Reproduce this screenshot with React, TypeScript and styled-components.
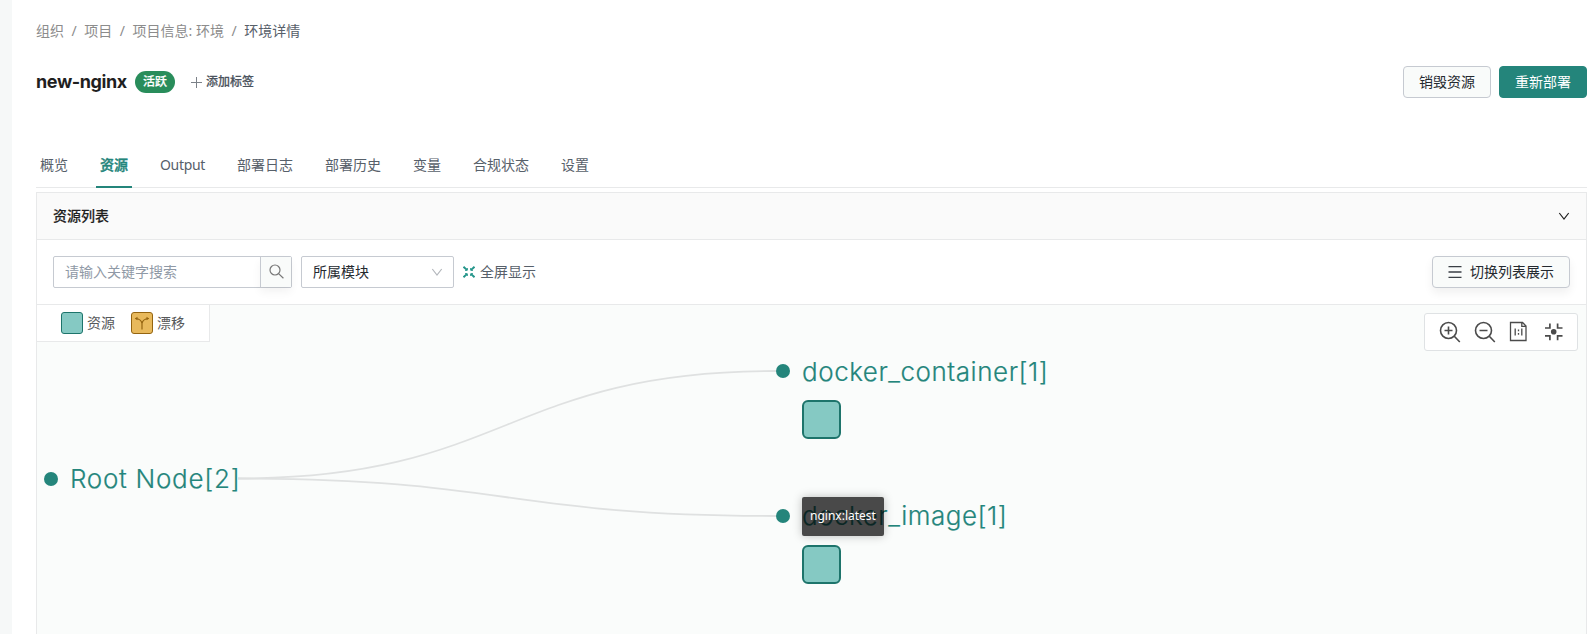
import React from "react";
import styled, { createGlobalStyle } from "styled-components";

const Global = createGlobalStyle`
  * { box-sizing: border-box; }
  body { margin: 0; background: #fff; overflow: hidden; }
`;

const TEAL = "#24857b";
const LINE = "#e8e9ea";

const Page = styled.div`
  display: flex;
  height: 634px;
  font: 14px/22px "Noto Sans", "Noto Sans CJK SC", sans-serif;
  color: #24292f;
`;
const Gutter = styled.div`
  flex: 0 0 12px;
  background: #f6f8f8;
`;
const Main = styled.main`
  flex: 1;
  min-width: 0;
  display: flex;
  flex-direction: column;
  padding: 20px 4px 0 24px;
`;
const Breadcrumb = styled.nav`
  display: flex;
  height: 22px;
  white-space: pre;
`;
const Crumb = styled.span<{ $current?: boolean }>`
  color: ${(p) => (p.$current ? "#57606a" : "#8c8c8c")};
`;
const Slash = styled.span`
  width: 20.300px;
  text-align: center;
  color: #8c8c8c;
`;
const TitleRow = styled.header`
  display: flex;
  align-items: center;
  height: 32px;
  margin-top: 24px;
`;
const Title = styled.h1`
  margin: 0;
  width: 91px;
  white-space: nowrap;
  font: 700 18px/26px Inter, sans-serif;
  letter-spacing: -0.4px;
  color: #1f1f1f;
`;
const Badge = styled.span`
  width: 40px;
  height: 22px;
  margin-left: 8px;
  border-radius: 11px;
  background: #298d5b;
  color: #fff;
  font-size: 12px;
  font-weight: 500;
  text-align: center;
  -webkit-text-stroke: 0.2px currentColor;
`;
const AddTag = styled.span`
  display: flex;
  align-items: center;
  gap: 4px;
  margin-left: 16px;
  font-size: 12px;
  font-weight: 500;
  color: #4b535d;
  -webkit-text-stroke: 0.2px currentColor;
`;
const Actions = styled.div`
  display: flex;
  gap: 8px;
  margin-left: auto;
`;
const Button = styled.button<{ $primary?: boolean; $width: number; $raised?: boolean }>`
  display: flex;
  align-items: center;
  justify-content: center;
  gap: 8px;
  width: ${(p) => p.$width}px;
  height: 32px;
  padding: 0;
  border: 1px solid ${(p) => (p.$primary ? TEAL : "#c6cad1")};
  border-radius: 4px;
  background: ${(p) => (p.$primary ? TEAL : "#f9fbfa")};
  color: ${(p) => (p.$primary ? "#fff" : "#24292f")};
  font: inherit;
  box-shadow: ${(p) => (p.$raised ? "0 5px 10px rgba(0, 0, 0, 0.06)" : "none")};
`;
const Tabs = styled.div`
  display: flex;
  gap: 24px;
  height: 46px;
  margin-top: 44px;
  border-bottom: 1px solid ${LINE};
  flex: none;
`;
const Tab = styled.div<{ $active?: boolean; $latin?: boolean }>`
  height: 46px;
  padding: 12px 4px 0;
  border-bottom: 2px solid ${(p) => (p.$active ? TEAL : "transparent")};
  color: ${(p) => (p.$active ? "#24857b" : "#57606a")};
  font-weight: ${(p) => (p.$active ? 500 : 400)};
  letter-spacing: ${(p) => (p.$latin ? "-0.33px" : "0")};
  -webkit-text-stroke: ${(p) => (p.$active ? "0.4px currentColor" : "0")};
`;
const Card = styled.section`
  flex: 1;
  display: flex;
  flex-direction: column;
  margin-top: 4px;
  border: 1px solid ${LINE};
  border-bottom: 0;
`;
const CardHeader = styled.div`
  display: flex;
  align-items: center;
  justify-content: space-between;
  height: 47px;
  flex: none;
  padding: 0 16px;
  background: #fafafa;
  border-bottom: 1px solid ${LINE};
  font-weight: 500;
  color: #1f1f1f;
  -webkit-text-stroke: 0.15px currentColor;
`;
const Toolbar = styled.div`
  display: flex;
  align-items: center;
  height: 65px;
  flex: none;
  padding: 0 16px;
  border-bottom: 1px solid ${LINE};
`;
const Search = styled.div`
  display: flex;
  width: 239px;
  height: 32px;
  border: 1px solid #c6cad1;
  border-radius: 2px;
`;
const Placeholder = styled.div`
  flex: 1;
  padding: 4px 11px;
  color: #8f99a6;
`;
const SearchButton = styled.div`
  display: flex;
  align-items: center;
  justify-content: center;
  width: 31px;
  padding-bottom: 2px;
  border-left: 1px solid #c6cad1;
  background: #f9fbfa;
  box-shadow: 0 5px 10px rgba(0, 0, 0, 0.05);
`;
const Select = styled.div`
  display: flex;
  align-items: center;
  justify-content: space-between;
  width: 153px;
  height: 32px;
  margin-left: 9px;
  padding: 0 10px 0 11px;
  border: 1px solid #c6cad1;
  border-radius: 2px;
`;
const FullScreen = styled.div`
  display: flex;
  align-items: center;
  gap: 5px;
  margin-left: 9px;
  margin-right: auto;
  color: #57606a;
`;
const Canvas = styled.div`
  position: relative;
  flex: 1;
  background: #fafcfb;
  overflow: hidden;
`;
const CanvasHead = styled.div`
  display: flex;
  justify-content: space-between;
  align-items: flex-start;
`;
const Legend = styled.div`
  display: flex;
  align-items: center;
  gap: 16px;
  width: 173px;
  height: 37px;
  padding-left: 24px;
  background: #fff;
  border-right: 1px solid ${LINE};
  border-bottom: 1px solid ${LINE};
`;
const LegendItem = styled.div`
  display: flex;
  align-items: center;
  gap: 4px;
  color: #57595b;
`;
const Swatch = styled.span<{ $fill: string; $line: string }>`
  display: flex;
  align-items: center;
  justify-content: center;
  width: 22px;
  height: 22px;
  border: 1px solid ${(p) => p.$line};
  border-radius: 3px;
  background: ${(p) => p.$fill};
`;
const Tools = styled.div`
  display: flex;
  align-items: center;
  gap: 12.600px;
  width: 154px;
  height: 38px;
  margin: 8px 8px 0 0;
  padding-left: 14px;
  background: #fff;
  border: 1px solid #dfe2e4;
  border-radius: 3px;
`;
const Edges = styled.svg`
  position: absolute;
  left: 0;
  top: 0;
`;
const Node = styled.div<{ $x: number; $y: number }>`
  position: absolute;
  left: ${(p) => p.$x}px;
  top: ${(p) => p.$y}px;
`;
const NodeLabel = styled.div<{ $spacing: number; $drop?: number }>`
  display: flex;
  align-items: center;
  gap: 12.500px;
  height: 36px;
  white-space: pre;
  color: ${TEAL};
  font: 300 26px/32px Inter, sans-serif;
  letter-spacing: ${(p) => p.$spacing}px;

  &::before {
    content: "";
    width: 14px;
    height: 14px;
    border-radius: 50%;
    background: ${TEAL};
  }

  span {
    padding-top: ${(p) => (p.$drop ?? 0) * 2}px;
    -webkit-text-stroke: 0.2px currentColor;
  }
`;
const Resource = styled.div`
  width: 39px;
  height: 39px;
  margin: 11px 0 0 26px;
  border: 2px solid #1d746b;
  border-radius: 6px;
  background: #85c9c3;
`;
const Tooltip = styled.div`
  position: absolute;
  left: 765px;
  top: 192px;
  width: 82px;
  height: 39px;
  border-radius: 2px;
  background: rgba(0, 0, 0, 0.71);
  box-shadow: 0 0 10px rgba(0, 0, 0, 0.25);
  color: #fff;
  font-size: 12px;
  line-height: 38px;
  text-align: center;
`;

const Chevron = ({ color, size }: { color: string; size: number }) => (
  <svg width={size} height="8" viewBox="0 0 11 8" fill="none" stroke={color} strokeWidth="1.2">
    <path d="M.8 1 5.5 7 10.2 1" />
  </svg>
);

const tabs = ["概览", "资源", "Output", "部署日志", "部署历史", "变量", "合规状态", "设置"];

export default function App() {
  return (
    <Page>
      <Global />
      <Gutter />
      <Main>
        <Breadcrumb>
          <Crumb>组织</Crumb><Slash>/</Slash>
          <Crumb>项目</Crumb><Slash>/</Slash>
          <Crumb>项目信息: 环境</Crumb><Slash>/</Slash>
          <Crumb $current>环境详情</Crumb>
        </Breadcrumb>
        <TitleRow>
          <Title>new-nginx</Title>
          <Badge>活跃</Badge>
          <AddTag>
            <svg width="11" height="11" viewBox="0 0 11 11" stroke="#7b8188" strokeWidth="1">
              <path d="M5.5 0v11M0 5.5h11" />
            </svg>
            添加标签
          </AddTag>
          <Actions>
            <Button $width={88}>销毁资源</Button>
            <Button $width={88} $primary>重新部署</Button>
          </Actions>
        </TitleRow>
        <Tabs>
          {tabs.map((t) => (
            <Tab key={t} $active={t === "资源"} $latin={t === "Output"}>{t}</Tab>
          ))}
        </Tabs>
        <Card>
          <CardHeader>
            资源列表
            <Chevron color="#1f1f1f" size={12} />
          </CardHeader>
          <Toolbar>
            <Search>
              <Placeholder>请输入关键字搜索</Placeholder>
              <SearchButton>
                <svg width="15" height="15" viewBox="0 0 15 15" fill="none" stroke="#777" strokeWidth="1.2">
                  <circle cx="6" cy="6" r="5" />
                  <path d="m9.6 9.6 4.8 4.6" />
                </svg>
              </SearchButton>
            </Search>
            <Select>
              所属模块
              <Chevron color="#b3b7bc" size={12} />
            </Select>
            <FullScreen>
              <svg width="12" height="12" viewBox="0 0 12 12" fill="none" stroke="#24958a" strokeWidth="1.9">
                <path d="M.5 .8 3.900 3.900M11.500 .8 8.100 3.900M.5 11.200 3.900 8.100M11.500 11.200 8.100 8.100" />
                <path strokeWidth="1" d="M4.300 2v2.300H2M7.700 2v2.300H10M4.300 10V7.700H2M7.700 10V7.700H10" />
              </svg>
              全屏显示
            </FullScreen>
            <Button $width={138} $raised>
              <svg width="14" height="12" viewBox="0 0 14 12" stroke="#3a3f45" strokeWidth="1.300">
                <path d="M.5 .7h13M.5 6h13M.5 11.300h13" />
              </svg>
              切换列表展示
            </Button>
          </Toolbar>
          <Canvas>
            <Edges width="1549" height="330" fill="none" stroke="#dfe1e1" strokeWidth="1.800">
              <path d="M201 173.500C470 173.500 470 66 739 66" />
              <path d="M201 173.500C470 173.500 470 211 739 211" />
            </Edges>
            <CanvasHead>
              <Legend>
                <LegendItem>
                  <Swatch $fill="#85c9c3" $line="#1d746b" />资源
                </LegendItem>
                <LegendItem>
                  <Swatch $fill="#e8b95c" $line="#946410">
                    <svg width="16" height="14" viewBox="0 0 16 14" fill="none" stroke="#946410" strokeWidth="1.200">
                      <path d="M8 13.500V7.500C7.500 4.500 5 2.800 1.500 2.500M8 7.500C8.500 4.500 11 2.800 14.500 2.500" />
                      <path fill="#946410" stroke="none" d="M.8 2.500 3.500 .8V4.200zM15.200 2.500 12.500 .8V4.200z" />
                    </svg>
                  </Swatch>漂移
                </LegendItem>
              </Legend>
              <Tools>
                <svg width="22" height="22" viewBox="0 0 22 22" fill="none" stroke="#4b4b4b" strokeWidth="1.600">
                  <circle cx="9.500" cy="9.500" r="8" /><path d="m15.300 15.300 5.500 5.700M5.500 9.500h8M9.500 5.500v8" />
                </svg>
                <svg width="22" height="22" viewBox="0 0 22 22" fill="none" stroke="#4b4b4b" strokeWidth="1.600">
                  <circle cx="9.500" cy="9.500" r="8" /><path d="m15.300 15.300 5.500 5.700M5.500 9.500h8" />
                </svg>
                <svg width="22" height="22" viewBox="0 0 22 22" fill="none" stroke="#4b4b4b" strokeWidth="1.300">
                  <path d="M2.500 1.500h12l3.500 3.500v14.500H2.500zM13.800 1.500V5.300H18M7.200 7.500v7M13.800 7.500v7" /><path d="M10.500 8.500v1.800M10.500 12v1.800" />
                </svg>
                <svg width="22" height="22" viewBox="0 0 22 22" fill="none" stroke="#4b4b4b" strokeWidth="1.700">
                  <circle cx="10.700" cy="10.700" r="2.800" fill="#4b4b4b" stroke="none" />
                  <path d="M2 7h4.900V2.500M19.500 7h-4.900V2.500M2 14.900h4.900v4.400M19.500 14.900h-4.900v4.400" />
                </svg>
              </Tools>
            </CanvasHead>
            <Node $x={6.5} $y={155.5}>
              <NodeLabel $spacing={0.7}><span>Root Node[2]</span></NodeLabel>
            </Node>
            <Node $x={738.5} $y={48}>
              <NodeLabel $spacing={0.53} $drop={1}><span>docker_container[1]</span></NodeLabel>
              <Resource />
            </Node>
            <Node $x={738.5} $y={193}>
              <NodeLabel $spacing={0.5}><span>docker_image[1]</span></NodeLabel>
              <Resource />
            </Node>
            <Tooltip>nginx:latest</Tooltip>
          </Canvas>
        </Card>
      </Main>
    </Page>
  );
}
